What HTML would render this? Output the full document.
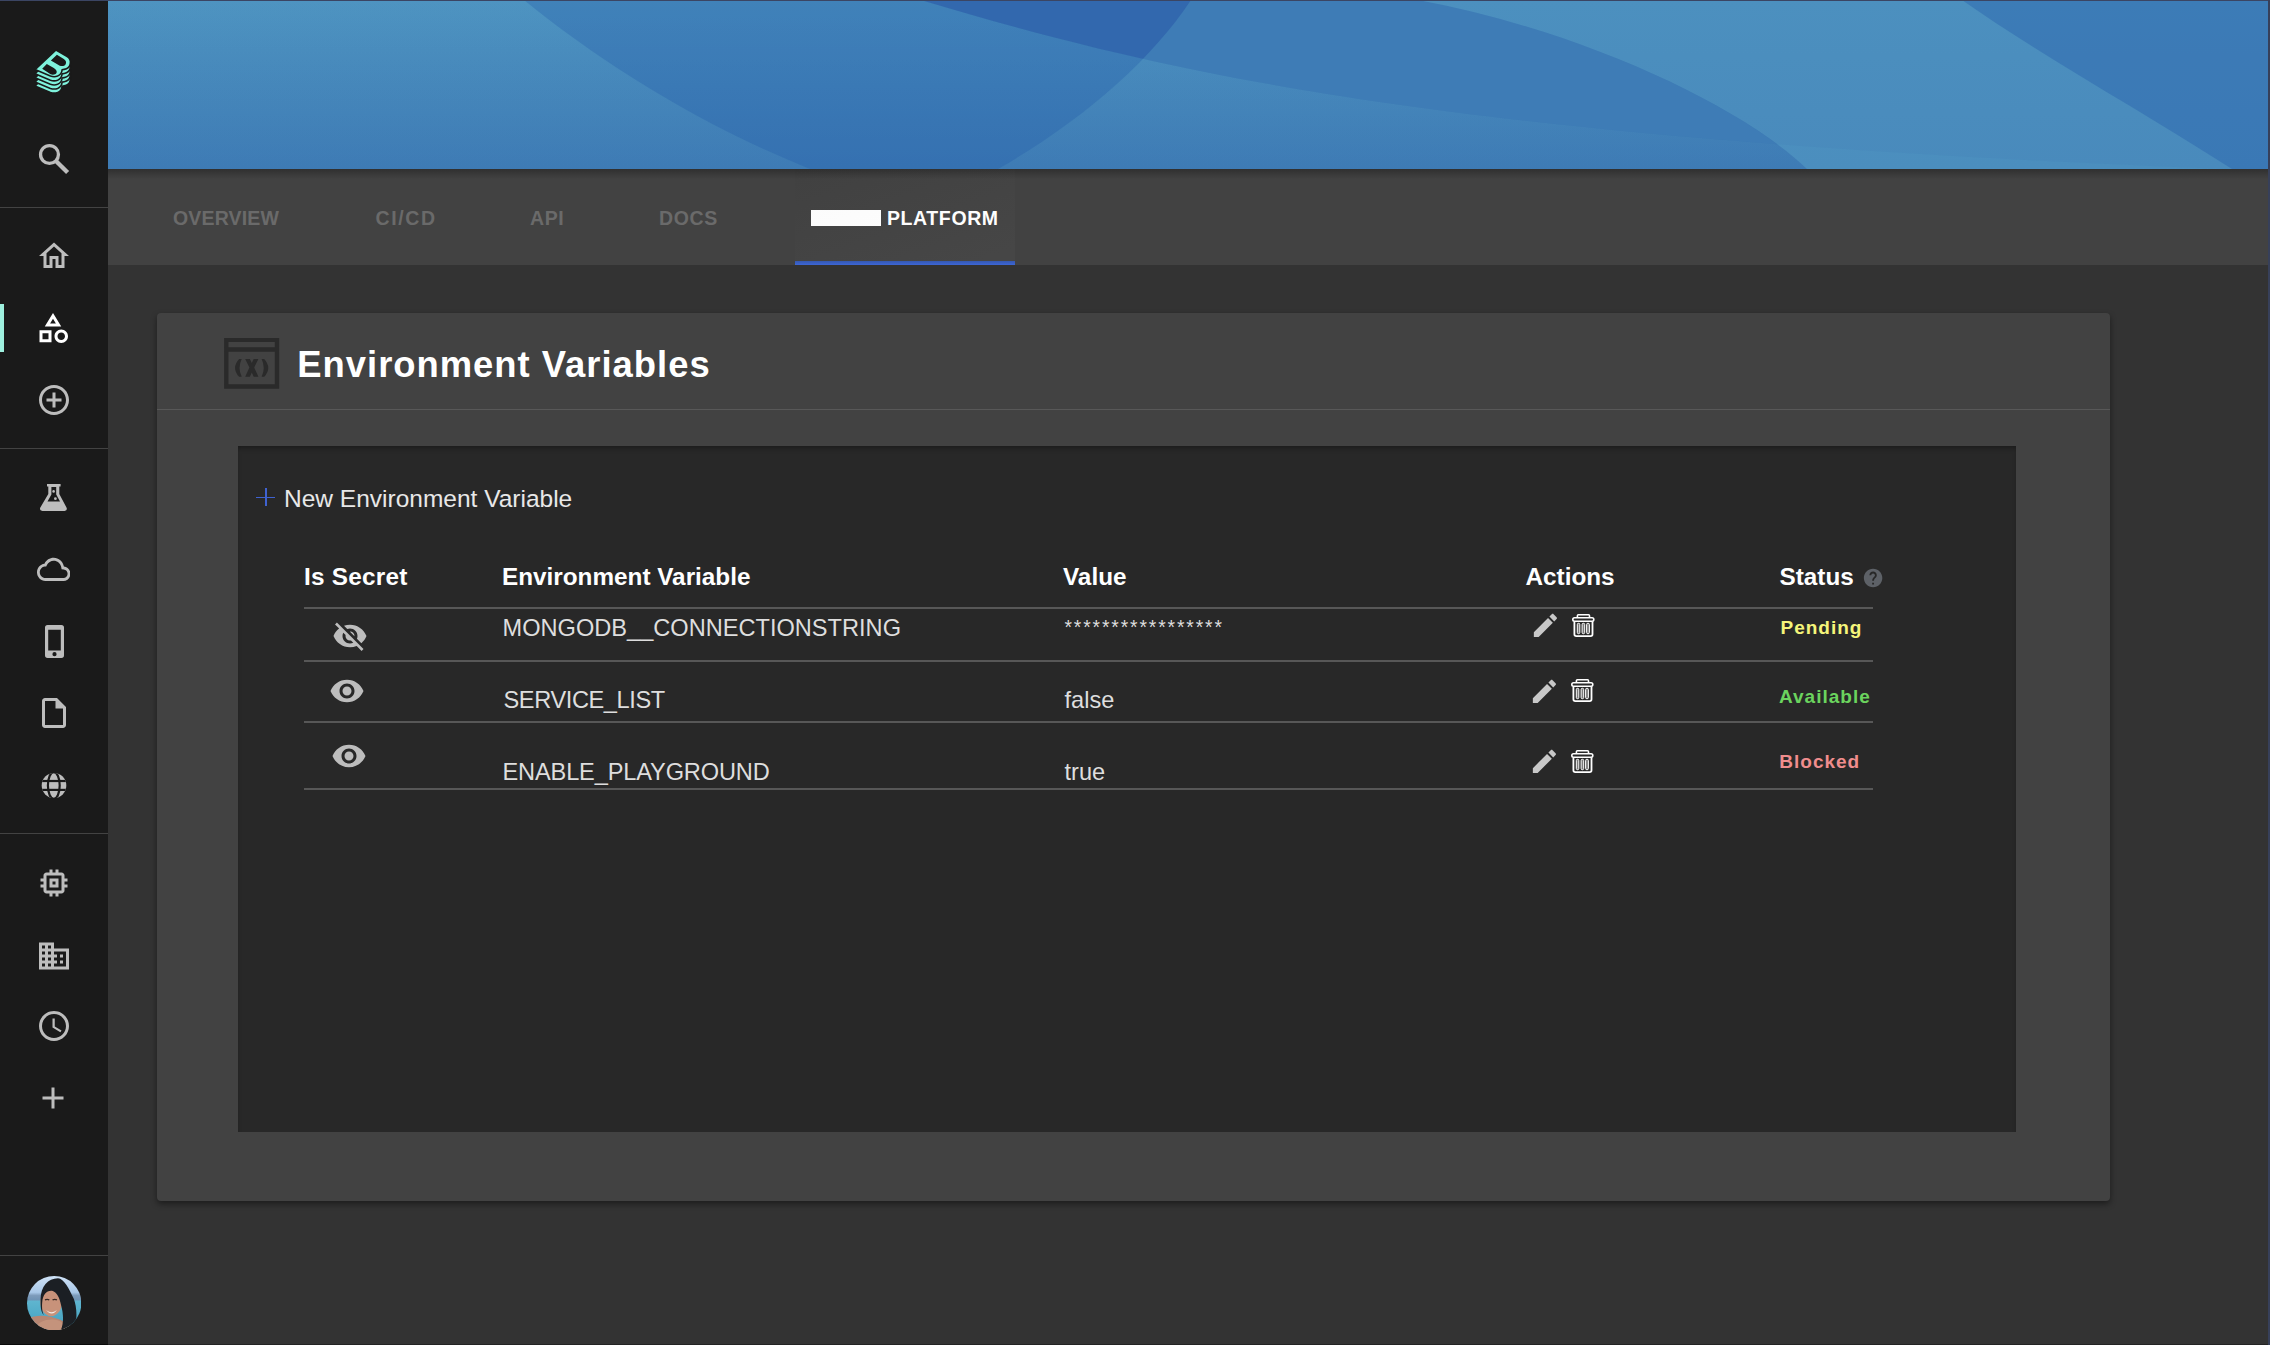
<!DOCTYPE html>
<html><head><meta charset="utf-8">
<style>
html,body{margin:0;padding:0;width:2270px;height:1346px;overflow:hidden;background:#333;}
body{position:relative;font-family:"Liberation Sans",sans-serif;}
.a{position:absolute;}
.t{position:absolute;line-height:1;white-space:nowrap;}
#sidebar{left:0;top:0;width:108px;height:1346px;background:#1a1a1a;}
.sep{position:absolute;left:0;width:108px;height:1px;background:#434343;}
.ic{position:absolute;}
#banner{left:108px;top:0;width:2160px;height:169px;overflow:hidden;}
#tabs{left:108px;top:169px;width:2160px;height:96px;background:#424242;}
.tab{position:absolute;line-height:1;white-space:nowrap;font-weight:bold;font-size:19.5px;letter-spacing:0.6px;color:#6a6a6a;top:208.8px;}
#card{left:157px;top:313px;width:1953px;height:888px;background:#424242;border-radius:4px;box-shadow:0 3px 6px rgba(0,0,0,0.45);}
#panel{left:238px;top:446px;width:1778px;height:686px;background:#282828;box-shadow:inset 0 4px 5px -2px rgba(0,0,0,0.35);}
.hd{position:absolute;line-height:1;white-space:nowrap;font-weight:bold;font-size:24.3px;color:#fff;top:565px;}
.rw{position:absolute;line-height:1;white-space:nowrap;font-size:23.6px;color:#dedede;}
.ln{position:absolute;left:304px;width:1569px;height:2px;background:#575757;}
.st{position:absolute;line-height:1;white-space:nowrap;font-weight:bold;font-size:19px;letter-spacing:1px;}
</style></head><body>
<!-- top and right edge lines -->
<div class="a" style="left:0;top:0;width:2270px;height:1px;background:#3b4563;z-index:5"></div>
<div class="a" style="left:2268px;top:0;width:2px;height:1346px;background:#37405a;z-index:5"></div>
<div class="a" style="left:0;top:1344px;width:108px;height:1px;background:#0a0a0a;z-index:5"></div><div class="a" style="left:108px;top:1344px;width:2160px;height:1px;background:#232323;z-index:5"></div>
<div class="a" style="left:0;top:1345px;width:2270px;height:1px;background:#ffffff;z-index:5"></div>

<!-- SIDEBAR -->
<div id="sidebar" class="a">
  <div class="sep" style="top:207px"></div>
  <div class="sep" style="top:448px"></div>
  <div class="sep" style="top:833px"></div>
  <div class="sep" style="top:1255px"></div>
  <div class="a" style="left:0;top:304px;width:4px;height:48px;background:#9ef0df"></div>
<svg class="ic" style="left:0;top:40px" width="108" height="60" viewBox="0 40 108 60"><path transform="translate(0,16.40)" d="M56.0,50.0 L66.8,56.3 C69.8,58.0 70.9,61.3 70.2,64.2 C69.6,66.9 67.2,68.8 64.2,69.4 L62.1,69.8 C61.9,72.4 60.5,74.9 57.6,76.1 C55.5,76.9 52.9,76.9 50.4,76.1 L35.0,69.6 Z" fill="#7ef2dc" stroke="#1a1a1a" stroke-width="1.6" stroke-linejoin="round"/><path transform="translate(0,12.30)" d="M56.0,50.0 L66.8,56.3 C69.8,58.0 70.9,61.3 70.2,64.2 C69.6,66.9 67.2,68.8 64.2,69.4 L62.1,69.8 C61.9,72.4 60.5,74.9 57.6,76.1 C55.5,76.9 52.9,76.9 50.4,76.1 L35.0,69.6 Z" fill="#7ef2dc" stroke="#1a1a1a" stroke-width="1.6" stroke-linejoin="round"/><path transform="translate(0,8.20)" d="M56.0,50.0 L66.8,56.3 C69.8,58.0 70.9,61.3 70.2,64.2 C69.6,66.9 67.2,68.8 64.2,69.4 L62.1,69.8 C61.9,72.4 60.5,74.9 57.6,76.1 C55.5,76.9 52.9,76.9 50.4,76.1 L35.0,69.6 Z" fill="#7ef2dc" stroke="#1a1a1a" stroke-width="1.6" stroke-linejoin="round"/><path transform="translate(0,4.10)" d="M56.0,50.0 L66.8,56.3 C69.8,58.0 70.9,61.3 70.2,64.2 C69.6,66.9 67.2,68.8 64.2,69.4 L62.1,69.8 C61.9,72.4 60.5,74.9 57.6,76.1 C55.5,76.9 52.9,76.9 50.4,76.1 L35.0,69.6 Z" fill="#7ef2dc" stroke="#1a1a1a" stroke-width="1.6" stroke-linejoin="round"/><path d="M56.0,50.0 L66.8,56.3 C69.8,58.0 70.9,61.3 70.2,64.2 C69.6,66.9 67.2,68.8 64.2,69.4 L62.1,69.8 C61.9,72.4 60.5,74.9 57.6,76.1 C55.5,76.9 52.9,76.9 50.4,76.1 L35.0,69.6 Z" fill="#7ef2dc" stroke="#1a1a1a" stroke-width="1.6" stroke-linejoin="round"/><path d="M56.9,54.8 L63.8,59.0 C66.1,60.3 66.6,62.8 65.5,64.5 C64.4,66.1 62.0,66.5 59.8,65.7 L50.9,60.5 Z" fill="#1a1a1a"/><path d="M46.8,64.1 L53.8,68.0 C56.3,69.4 57.3,71.6 56.5,73.0 C55.6,74.6 53,75.1 50.6,74.3 L42.2,68.8 Z" fill="#1a1a1a"/></svg>
<svg class="ic" style="left:26.8px;top:1275.7px" width="54.4" height="54.4" viewBox="0 0 100 100"><defs><clipPath id="avc"><circle cx="50" cy="50" r="50"/></clipPath>
<linearGradient id="sky" x1="0" y1="0" x2="0" y2="1"><stop offset="0" stop-color="#cfe2f6"/><stop offset="0.3" stop-color="#a9c8e8"/><stop offset="0.36" stop-color="#7d9bbb"/><stop offset="0.44" stop-color="#6f93b5"/><stop offset="0.46" stop-color="#5fb5cf"/><stop offset="1" stop-color="#3f9fbf"/></linearGradient></defs>
<g clip-path="url(#avc)">
<rect x="0" y="0" width="100" height="100" fill="url(#sky)"/>
<path d="M0,78 C20,70 40,72 60,80 L100,100 L0,100 Z" fill="#b78672"/>
<path d="M14,100 C18,86 30,80 46,80 C62,80 70,88 74,100 Z" fill="#c4937c"/>
<ellipse cx="44.5" cy="48" rx="20" ry="26" fill="#c8927a"/>
<path d="M25,46 C24,20 38,4 57,4 C68,5 77,22 86,42 C91,55 93,75 88,96 L62,100 C68,85 67,70 63,55 C60,40 55,29 46,27 C36,26 29,34 28,48 C27,58 28,66 31,72 C25,66 25,55 25,46 Z" fill="#1b1f24"/>
<path d="M35,62 C40,68 50,68 55,62 C51,71 40,71 35,62 Z" fill="#f4ece6"/>
<path d="M33,44 q4,-2 8,0 M47,44 q4,-2 8,0" stroke="#3a2a24" stroke-width="2.5" fill="none"/>
</g></svg>

  <svg class="ic" style="left:0;top:130px" width="108" height="60" viewBox="0 130 108 60"><circle cx="49.5" cy="154.5" r="8.95" fill="none" stroke="#bdbdbd" stroke-width="3.3"/><line x1="56.2" y1="161.2" x2="67.6" y2="172.6" stroke="#bdbdbd" stroke-width="4.3"/></svg>
<svg class="ic" style="left:36px;top:238px" width="36" height="36" viewBox="0 0 24 24"><path fill="#bdbdbd"  d="M12 5.69l5 4.5V18h-2v-6H9v6H7v-7.81l5-4.5M12 3L2 12h3v8h6v-6h2v6h6v-8h3L12 3z"/></svg>
<svg class="ic" style="left:34.6px;top:310px" width="36" height="36" viewBox="0 0 24 24"><path fill="#ffffff"  d="M12 2l-5.5 9h11L12 2zm0 3.84L13.93 9h-3.87L12 5.84zM17.5 13c-2.49 0-4.5 2.01-4.5 4.5s2.01 4.5 4.5 4.5 4.5-2.01 4.5-4.5-2.01-4.5-4.5-4.5zm0 7c-1.38 0-2.5-1.12-2.5-2.5s1.12-2.5 2.5-2.5 2.5 1.12 2.5 2.5-1.12 2.5-2.5 2.5zM3 21.5h8v-8H3v8zm2-6h4v4H5v-4z"/></svg>
<svg class="ic" style="left:35.9px;top:381.8px" width="36" height="36" viewBox="0 0 24 24"><path fill="#bdbdbd"  d="M13 7h-2v4H7v2h4v4h2v-4h4v-2h-4V7zm-1-5C6.48 2 2 6.48 2 12s4.48 10 10 10 10-4.48 10-10S17.52 2 12 2zm0 18c-4.41 0-8-3.59-8-8s3.59-8 8-8 8 3.59 8 8-3.59 8-8 8z"/></svg>
<svg class="ic" style="left:0;top:470px" width="108" height="50" viewBox="0 470 108 50"><path fill="#bdbdbd" fill-rule="evenodd" d="M47,484 H60.6 V486.6 H59.3 V494 L66.6,507.8 Q67.6,510.8 64.6,511 H42.4 Q39.2,510.8 40.2,507.8 L48.3,494 V486.6 H47 Z M51.4,487 V494.6 L47.5,501.6 H60 L56.2,494.6 V487 Z"/><circle cx="53.6" cy="491.4" r="1.3" fill="#bdbdbd"/><circle cx="55.4" cy="498.7" r="1.4" fill="#bdbdbd"/></svg>
<svg class="ic" style="left:36.9px;top:552.0px" width="33.4" height="34.8" viewBox="0 0 24 24" preserveAspectRatio="none"><path fill="#bdbdbd"  d="M12 6c2.62 0 4.88 1.86 5.39 4.43l.3 1.5 1.53.11c1.56.1 2.78 1.41 2.78 2.96 0 1.65-1.35 3-3 3H6c-2.21 0-4-1.79-4-4 0-2.05 1.53-3.76 3.56-3.97l1.07-.11.5-.95C8.08 7.14 9.94 6 12 6m0-2C9.11 4 6.6 5.64 5.35 8.04 2.34 8.36 0 10.91 0 14c0 3.31 2.69 6 6 6h13c2.76 0 5-2.24 5-5 0-2.64-2.05-4.78-4.65-4.96C18.67 6.59 15.64 4 12 4z"/></svg>
<svg class="ic" style="left:0;top:620px" width="108" height="45" viewBox="0 620 108 45"><path fill="#bdbdbd" fill-rule="evenodd" d="M47.6,625 H61.4 Q64,625 64,627.6 V655.3 Q64,657.9 61.4,657.9 H47.6 Q45,657.9 45,655.3 V627.6 Q45,625 47.6,625 Z M48.2,629.8 V650.4 H60.8 V629.8 Z M54.5,652.1 A2.1,2.1 0 1 0 54.5,656.3 A2.1,2.1 0 1 0 54.5,652.1 Z"/></svg>
<svg class="ic" style="left:36px;top:695px" width="36" height="36" viewBox="0 0 24 24"><path fill="#bdbdbd"  d="M14 2H6c-1.1 0-1.99.9-1.99 2L4 20c0 1.1.89 2 1.99 2H18c1.1 0 2-.9 2-2V8l-6-6zM6 20V4h7v5h5v11H6z"/></svg>
<svg class="ic" style="left:0;top:765px" width="108" height="40" viewBox="0 765 108 40"><defs><clipPath id="gc"><ellipse cx="54" cy="785.5" rx="12.3" ry="12.6"/></clipPath></defs><g clip-path="url(#gc)"><rect x="40" y="770" width="30" height="32" fill="#bdbdbd"/><rect x="40" y="779.9" width="30" height="2.2" fill="#1a1a1a"/><rect x="40" y="788.8" width="30" height="2.2" fill="#1a1a1a"/><ellipse cx="53.8" cy="785.5" rx="5.9" ry="13.4" fill="none" stroke="#1a1a1a" stroke-width="2.2"/><rect x="40" y="770" width="30" height="3" fill="#1a1a1a"/></g></svg>
<svg class="ic" style="left:35.5px;top:864.5px" width="36" height="36" viewBox="0 0 24 24"><path fill="#bdbdbd"  d="M15 9H9v6h6V9zm-2 4h-2v-2h2v2zm8-2V9h-2V7c0-1.1-.9-2-2-2h-2V3h-2v2h-2V3H9v2H7c-1.1 0-2 .9-2 2v2H3v2h2v2H3v2h2v2c0 1.1.9 2 2 2h2v2h2v-2h2v2h2v-2h2c1.1 0 2-.9 2-2v-2h2v-2h-2v-2h2zm-4 6H7V7h10v10z"/></svg>
<svg class="ic" style="left:35.9px;top:938.1px" width="36" height="36" viewBox="0 0 24 24"><path fill="#bdbdbd"  d="M12 7V3H2v18h20V7H12zM6 19H4v-2h2v2zm0-4H4v-2h2v2zm0-4H4V9h2v2zm0-4H4V5h2v2zm4 12H8v-2h2v2zm0-4H8v-2h2v2zm0-4H8V9h2v2zm0-4H8V5h2v2zm10 12h-8v-2h2v-2h-2v-2h2v-2h-2V9h8v10zm-2-8h-2v2h2v-2zm0 4h-2v2h2v-2z"/></svg>
<svg class="ic" style="left:35.9px;top:1008.2px" width="36" height="36" viewBox="0 0 24 24"><path fill="#bdbdbd"  d="M11.99 2C6.47 2 2 6.48 2 12s4.47 10 9.99 10C17.52 22 22 17.52 22 12S17.52 2 11.99 2zM12 20c-4.42 0-8-3.58-8-8s3.58-8 8-8 8 3.58 8 8-3.58 8-8 8zm.5-13H11v6l5.25 3.15.75-1.23-4.5-2.67z"/></svg>
<svg class="ic" style="left:35.3px;top:1080.3px" width="36" height="36" viewBox="0 0 24 24"><path fill="#bdbdbd"  d="M19 13h-6v6h-2v-6H5v-2h6V5h2v6h6v2z"/></svg>

</div>

<!-- BANNER -->
<div id="banner" class="a">
<svg width="2160" height="169" viewBox="108 0 2160 169" style="position:absolute;left:0;top:0;display:block">
<defs>
<linearGradient id="bg1" x1="0" y1="0" x2="0" y2="1"><stop offset="0" stop-color="#4e94c1"/><stop offset="1" stop-color="#4b8ebe"/></linearGradient>
<linearGradient id="dk1" x1="0" y1="0" x2="0" y2="1"><stop offset="0" stop-color="#1f4f9f" stop-opacity="0"/><stop offset="1" stop-color="#1f4f9f" stop-opacity="0.30"/></linearGradient>
<clipPath id="leftD"><path d="M108,0 L1418,0 C1580,30 1740,105 1807,169 L108,169 Z"/></clipPath>
<clipPath id="circ"><path d="M524,0 C600,62 700,125 810,169 L998,169 C1080,122 1150,62 1191,0 Z"/></clipPath>
</defs>
<rect x="108" y="0" width="2160" height="169" fill="url(#bg1)"/>
<path d="M108,0 L1418,0 C1580,30 1740,105 1807,169 L108,169 Z" fill="url(#dk1)"/>
<path d="M524,0 C600,62 700,125 810,169 L998,169 C1080,122 1150,62 1191,0 Z" fill="#2258a8" fill-opacity="0.30"/>
<path d="M921,0 C1166.8,73.3 1437.8,138.5 2226,169 L2268,169 L2268,0 Z" fill="#1f4f9f" fill-opacity="0.05"/>
<g clip-path="url(#leftD)"><path d="M921,0 C1166.8,73.3 1437.8,138.5 2226,169 L2268,169 L2268,0 Z" fill="#3e7cb6"/></g>
<g clip-path="url(#circ)"><path d="M921,0 C1166.8,73.3 1437.8,138.5 2226,169 L2268,169 L2268,0 Z" fill="#3268ae"/></g>
<path d="M1962,0 L2268,0 L2268,169 L2232,169 C2140,110 2040,55 1962,0 Z" fill="#2258a8" fill-opacity="0.36"/>
</svg>
</div>

<!-- TABS -->
<div id="tabs" class="a">
  <div class="a" style="left:0;top:0;width:2160px;height:10px;background:linear-gradient(rgba(0,0,0,0.28),rgba(0,0,0,0))"></div>
</div>
<div class="tab" style="left:173px;letter-spacing:0.15px">OVERVIEW</div>
<div class="tab" style="left:375.5px;letter-spacing:1.6px">CI/CD</div>
<div class="tab" style="left:530px">API</div>
<div class="tab" style="left:659px">DOCS</div>
<div class="a" style="left:811px;top:210px;width:70px;height:16px;background:#fff"></div>
<div class="tab" style="left:887px;color:#fff">PLATFORM</div>
<div class="a" style="left:795px;top:169px;width:220px;height:92px;background:linear-gradient(160deg,rgba(0,0,0,0.02),rgba(255,255,255,0.025))"></div>
<div class="a" style="left:795px;top:261px;width:220px;height:4px;background:linear-gradient(#3558b0,#3d66d6)"></div>

<!-- CARD -->
<div id="card" class="a"></div>
<div class="a" style="left:157px;top:409px;width:1953px;height:1px;background:#585858"></div>
<svg class="ic" style="left:215px;top:330px" width="75" height="70" viewBox="215 330 75 70">
<path fill="#2a2a2a" fill-rule="evenodd" d="M224.1,338.1 H279.2 V388.8 H224.1 Z M228.5,342.1 V347.2 H274.8 V342.1 Z M228.5,351.8 V384.2 H274.8 V351.8 Z"/>
<path fill="#2a2a2a" d="M239.1,358.9 L241.7,358.9 Q237.4,367.85 241.7,376.8 L239.1,376.8 Q231.0,367.85 239.1,358.9 Z"/>
<path fill="#2a2a2a" d="M264.2,358.9 L261.6,358.9 Q265.9,367.85 261.6,376.8 L264.2,376.8 Q272.3,367.85 264.2,358.9 Z"/>
<path fill="#2a2a2a" d="M245.2,358.9 L249.9,358.9 L251.8,362.9 L253.7,358.9 L258.4,358.9 L254.2,367.6 L258.4,376.8 L253.7,376.8 L251.8,372.5 L249.9,376.8 L245.2,376.8 L249.4,367.6 Z"/>
</svg>

<div class="t" style="left:297.3px;top:347.4px;font-weight:bold;font-size:36.4px;letter-spacing:1.0px;color:#fff">Environment Variables</div>

<div id="panel" class="a"></div>
<div class="a" style="left:256px;top:496.6px;width:19px;height:1.9px;background:#3f62d0"></div><div class="a" style="left:264.6px;top:487.9px;width:2.1px;height:18.6px;background:#3f62d0"></div>

<div class="t" style="left:284px;top:487.4px;font-size:24.5px;color:#e8e8e8">New Environment Variable</div>

<div class="hd" style="left:304px;letter-spacing:0.25px">Is Secret</div>
<div class="hd" style="left:502px">Environment Variable</div>
<div class="hd" style="left:1063px">Value</div>
<div class="hd" style="left:1525.5px">Actions</div>
<div class="hd" style="left:1779.5px">Status</div>

<div class="ln" style="top:607px"></div>
<div class="ln" style="top:660px"></div>
<div class="ln" style="top:721px"></div>
<div class="ln" style="top:788px"></div>

<div class="rw" style="left:502.5px;top:617.1px">MONGODB__CONNECTIONSTRING</div>
<div class="rw" style="left:503.5px;top:688.8px;letter-spacing:-0.4px">SERVICE_LIST</div>
<div class="rw" style="left:502.5px;top:760.6px;letter-spacing:-0.15px">ENABLE_PLAYGROUND</div>
<div class="rw" style="left:1064.5px;top:617.5px;font-size:19.3px;letter-spacing:1.87px">*****************</div>
<div class="rw" style="left:1064.5px;top:688.8px">false</div>
<div class="rw" style="left:1064.5px;top:761.3px">true</div>

<div class="st" style="left:1780.5px;top:617.9px;color:#f5f57a">Pending</div>
<div class="st" style="left:1779px;top:686.9px;color:#6bd45e">Available</div>
<div class="st" style="left:1779.3px;top:751.9px;color:#f08d8d">Blocked</div>
<svg class="ic" style="left:332.3px;top:618.4px" width="36" height="36" viewBox="0 0 24 24"><path fill="#bdbdbd" d="M12 7c2.76 0 5 2.24 5 5 0 .65-.13 1.26-.36 1.83l2.92 2.92c1.51-1.26 2.7-2.89 3.43-4.75-1.73-4.39-6-7.5-11-7.5-1.4 0-2.74.25-3.98.7l2.16 2.16C10.74 7.13 11.35 7 12 7zM2 4.27l2.28 2.28.46.46C3.08 8.3 1.78 10.02 1 12c1.73 4.39 6 7.5 11 7.5 1.55 0 3.03-.3 4.38-.84l.42.42L19.73 22 21 20.73 3.27 3 2 4.27zM7.53 9.8l1.55 1.55c-.05.21-.08.43-.08.65 0 1.66 1.34 3 3 3 .22 0 .44-.03.65-.08l1.55 1.55c-.67.33-1.41.53-2.2.53-2.76 0-5-2.24-5-5 0-.79.2-1.53.53-2.2zm4.31-.78l3.15 3.15.02-.16c0-1.66-1.34-3-3-3l-.17.01z"/></svg>
<svg class="ic" style="left:329.3px;top:673.4px" width="36" height="36" viewBox="0 0 24 24"><path fill="#bdbdbd" d="M12 4.5C7 4.5 2.73 7.61 1 12c1.73 4.39 6 7.5 11 7.5s9.27-3.11 11-7.5c-1.73-4.39-6-7.5-11-7.5zM12 17c-2.76 0-5-2.24-5-5s2.24-5 5-5 5 2.24 5 5-2.24 5-5 5zm0-8c-1.66 0-3 1.34-3 3s1.34 3 3 3 3-1.34 3-3-1.34-3-3-3z"/></svg>
<svg class="ic" style="left:331.1px;top:738.1px" width="36" height="36" viewBox="0 0 24 24"><path fill="#bdbdbd" d="M12 4.5C7 4.5 2.73 7.61 1 12c1.73 4.39 6 7.5 11 7.5s9.27-3.11 11-7.5c-1.73-4.39-6-7.5-11-7.5zM12 17c-2.76 0-5-2.24-5-5s2.24-5 5-5 5 2.24 5 5-2.24 5-5 5zm0-8c-1.66 0-3 1.34-3 3s1.34 3 3 3 3-1.34 3-3-1.34-3-3-3z"/></svg>
<svg class="ic" style="left:1530.2px;top:610px" width="30.8" height="30.8" viewBox="0 0 24 24"><path fill="#c8c8c8" d="M3 17.25V21h3.75L17.81 9.94l-3.75-3.75L3 17.25zM20.71 7.04c.39-.39.39-1.02 0-1.41l-2.34-2.34c-.39-.39-1.02-.39-1.41 0l-1.83 1.83 3.75 3.75 1.83-1.83z"/></svg>
<svg class="ic" style="left:1529.05px;top:676.15px" width="30.8" height="30.8" viewBox="0 0 24 24"><path fill="#c8c8c8" d="M3 17.25V21h3.75L17.81 9.94l-3.75-3.75L3 17.25zM20.71 7.04c.39-.39.39-1.02 0-1.41l-2.34-2.34c-.39-.39-1.02-.39-1.41 0l-1.83 1.83 3.75 3.75 1.83-1.83z"/></svg>
<svg class="ic" style="left:1529.05px;top:745.75px" width="30.8" height="30.8" viewBox="0 0 24 24"><path fill="#c8c8c8" d="M3 17.25V21h3.75L17.81 9.94l-3.75-3.75L3 17.25zM20.71 7.04c.39-.39.39-1.02 0-1.41l-2.34-2.34c-.39-.39-1.02-.39-1.41 0l-1.83 1.83 3.75 3.75 1.83-1.83z"/></svg>
<svg class="ic" style="left:1572.0px;top:614.2px" width="23" height="24" viewBox="0 0 23 24"><g fill="none" stroke="#ffffff"><path stroke-width="1.6" d="M5.4,3.6 V1.7 Q5.4,0.8 6.3,0.8 H16.6 Q17.5,0.8 17.5,1.7 V3.6"/><rect x="0.8" y="3.8" width="21" height="3.4" rx="1.7" stroke-width="1.6"/><path stroke-width="1.8" d="M2.4,7.4 V20.3 Q2.4,22.1 4.3,22.1 H18.6 Q20.5,22.1 20.5,20.3 V7.4"/></g><g fill="#7c7c7c" stroke="#ffffff" stroke-width="1"><rect x="5.3" y="9.3" width="2.5" height="10.4" rx="1.2"/><rect x="10.1" y="9.3" width="2.6" height="10.4" rx="1.2"/><rect x="14.6" y="9.3" width="2.8" height="10.4" rx="1.2"/></g></svg>
<svg class="ic" style="left:1570.6px;top:679px" width="23" height="24" viewBox="0 0 23 24"><g fill="none" stroke="#ffffff"><path stroke-width="1.6" d="M5.4,3.6 V1.7 Q5.4,0.8 6.3,0.8 H16.6 Q17.5,0.8 17.5,1.7 V3.6"/><rect x="0.8" y="3.8" width="21" height="3.4" rx="1.7" stroke-width="1.6"/><path stroke-width="1.8" d="M2.4,7.4 V20.3 Q2.4,22.1 4.3,22.1 H18.6 Q20.5,22.1 20.5,20.3 V7.4"/></g><g fill="#7c7c7c" stroke="#ffffff" stroke-width="1"><rect x="5.3" y="9.3" width="2.5" height="10.4" rx="1.2"/><rect x="10.1" y="9.3" width="2.6" height="10.4" rx="1.2"/><rect x="14.6" y="9.3" width="2.8" height="10.4" rx="1.2"/></g></svg>
<svg class="ic" style="left:1570.6px;top:749.6px" width="23" height="24" viewBox="0 0 23 24"><g fill="none" stroke="#ffffff"><path stroke-width="1.6" d="M5.4,3.6 V1.7 Q5.4,0.8 6.3,0.8 H16.6 Q17.5,0.8 17.5,1.7 V3.6"/><rect x="0.8" y="3.8" width="21" height="3.4" rx="1.7" stroke-width="1.6"/><path stroke-width="1.8" d="M2.4,7.4 V20.3 Q2.4,22.1 4.3,22.1 H18.6 Q20.5,22.1 20.5,20.3 V7.4"/></g><g fill="#7c7c7c" stroke="#ffffff" stroke-width="1"><rect x="5.3" y="9.3" width="2.5" height="10.4" rx="1.2"/><rect x="10.1" y="9.3" width="2.6" height="10.4" rx="1.2"/><rect x="14.6" y="9.3" width="2.8" height="10.4" rx="1.2"/></g></svg>
<svg class="ic" style="left:1861.75px;top:567.4px" width="22.2" height="22.2" viewBox="0 0 24 24"><path fill="#5d6167" d="M12 2C6.48 2 2 6.48 2 12s4.48 10 10 10 10-4.48 10-10S17.52 2 12 2zm1 17h-2v-2h2v2zm2.07-7.75l-.9.92C13.45 12.9 13 13.5 13 15h-2v-.5c0-1.1.45-2.1 1.17-2.83l1.24-1.26c.37-.36.59-.86.59-1.41 0-1.1-.9-2-2-2s-2 .9-2 2H8c0-2.21 1.79-4 4-4s4 1.79 4 4c0 .88-.36 1.68-.93 2.25z"/></svg>

</body></html>
